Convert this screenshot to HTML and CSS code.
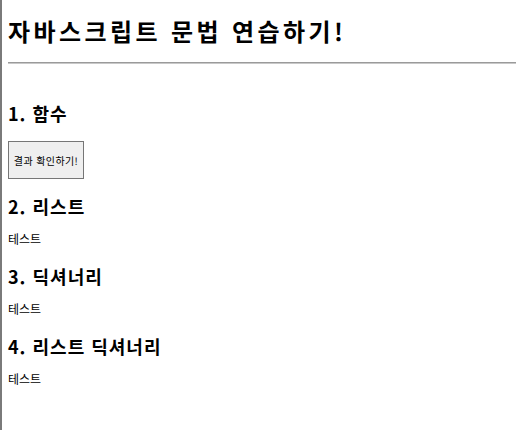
FILE: index.html
```html
<!DOCTYPE html>
<html lang="ko">
<head>
<meta charset="utf-8">
<title>자바스크립트 문법 연습하기!</title>
<link rel="stylesheet" href="styles.css">
</head>
<body>
<h1 class="title">자바스크립트 문법 연습하기!</h1>
<hr class="rule">
<h3 class="section first">1. 함수</h3>
<button class="btn" type="button">결과 확인하기!</button>
<h3 class="section after-btn">2. 리스트</h3>
<div class="test">테스트</div>
<h3 class="section">3. 딕셔너리</h3>
<div class="test">테스트</div>
<h3 class="section">4. 리스트 딕셔너리</h3>
<div class="test">테스트</div>
</body>
</html>
```
FILE: styles.css
```css
html {
  border-left: 2px solid #7a7a7a;
  min-height: 100%;
  box-sizing: border-box;
}
body {
  margin: 0;
  padding: 0 0 0 6px;
  font-family: "Noto Sans CJK KR", "Noto Sans", sans-serif;
  color: #000;
  background: #fff;
}
.title {
  margin: 16px 0 0;
  font-size: 24px;
  line-height: 30px;
  font-weight: 700;
  letter-spacing: 3.4px;
}
.rule {
  margin: 16px 0 0;
  border: 0;
  border-top: 1px solid #9a9a9a;
  border-bottom: 1px solid #c8c8c8;
  height: 0;
}
.section {
  margin: 17px 0 0;
  font-size: 18px;
  line-height: 24px;
  font-weight: 700;
  letter-spacing: 1px;
}
.section.first {
  margin-top: 37px;
}
.section.after-btn {
  margin-top: 15px;
}
.btn {
  display: block;
  margin: 16px 0 0;
  width: 76px;
  height: 38px;
  padding: 0;
  border: 1px solid #767676;
  border-radius: 0;
  background: #efefef;
  font-family: "Noto Sans CJK KR", sans-serif;
  font-size: 10px;
  letter-spacing: 0.4px;
  color: #000;
}
.test {
  margin: 13px 0 0;
  font-size: 12px;
  line-height: 16px;
}
```
